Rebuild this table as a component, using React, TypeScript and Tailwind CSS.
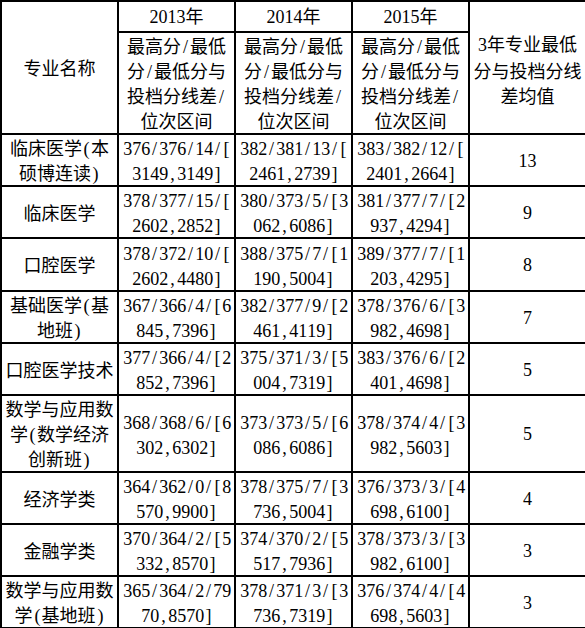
import React from "react";

const isAscii = (c: string) => /[\x00-\x7f]/.test(c);

function Half({ s }: { s: string }) {
  return (
    <>
      {s.split("").map((c, i) =>
        isAscii(c) ? (
          <span
            key={i}
            className="inline-block w-[9px] text-center font-['Liberation_Serif',serif] text-[19px] scale-x-[0.95]"
          >
            {c}
          </span>
        ) : (
          <span key={i}>{c}</span>
        )
      )}
    </>
  );
}

function Lines({ lines }: { lines: string[] }) {
  return (
    <div className="flex flex-col items-center">
      {lines.map((l, i) => (
        <div key={i} className="whitespace-nowrap leading-[25px] h-[25px]">
          <Half s={l} />
        </div>
      ))}
    </div>
  );
}

type Row = {
  h: string;
  name: string[];
  a: string[];
  b: string[];
  c: string[];
  avg: string;
};

const rows: Row[] = [
  { h: "h-[52px]", name: ["临床医学(本", "硕博连读)"], a: ["376/376/14/[", "3149,3149]"], b: ["382/381/13/[", "2461,2739]"], c: ["383/382/12/[", "2401,2664]"], avg: "13" },
  { h: "h-[52px]", name: ["临床医学"], a: ["378/377/15/[", "2602,2852]"], b: ["380/373/5/[3", "062,6086]"], c: ["381/377/7/[2", "937,4294]"], avg: "9" },
  { h: "h-[53px]", name: ["口腔医学"], a: ["378/372/10/[", "2602,4480]"], b: ["388/375/7/[1", "190,5004]"], c: ["389/377/7/[1", "203,4295]"], avg: "8" },
  { h: "h-[52px]", name: ["基础医学(基", "地班)"], a: ["367/366/4/[6", "845,7396]"], b: ["382/377/9/[2", "461,4119]"], c: ["378/376/6/[3", "982,4698]"], avg: "7" },
  { h: "h-[52px]", name: ["口腔医学技术"], a: ["377/366/4/[2", "852,7396]"], b: ["375/371/3/[5", "004,7319]"], c: ["383/376/6/[2", "401,4698]"], avg: "5" },
  { h: "h-[77px]", name: ["数学与应用数", "学(数学经济", "创新班)"], a: ["368/368/6/[6", "302,6302]"], b: ["373/373/5/[6", "086,6086]"], c: ["378/374/4/[3", "982,5603]"], avg: "5" },
  { h: "h-[52px]", name: ["经济学类"], a: ["364/362/0/[8", "570,9900]"], b: ["378/375/7/[3", "736,5004]"], c: ["376/373/3/[4", "698,6100]"], avg: "4" },
  { h: "h-[52px]", name: ["金融学类"], a: ["370/364/2/[5", "332,8570]"], b: ["374/370/2/[5", "517,7936]"], c: ["378/373/3/[3", "982,6100]"], avg: "3" },
  { h: "h-[52px]", name: ["数学与应用数", "学(基地班)"], a: ["365/364/2/79", "70,8570]"], b: ["378/371/3/[3", "736,7319]"], c: ["376/374/4/[4", "698,5603]"], avg: "3" },
];

const cell = "border-2 border-black p-0 align-middle text-center";
const sub = ["最高分/最低", "分/最低分与", "投档分线差/", "位次区间"];

export default function App() {
  return (
    <div className="bg-white w-[585px] h-[628px] overflow-hidden font-['Noto_Sans_CJK_SC',sans-serif] text-[18px] text-black">
      <table className="table-fixed border-collapse w-[585px]">
        <colgroup>
          <col className="w-[117px]" />
          <col className="w-[117px]" />
          <col className="w-[117px]" />
          <col className="w-[117px]" />
          <col className="w-[117px]" />
        </colgroup>
        <tbody>
          <tr className="h-[31px]">
            <td rowSpan={2} className={cell}>
              <Lines lines={["专业名称"]} />
            </td>
            {["2013", "2014", "2015"].map((y) => (
              <td key={y} className={cell}>
                <div className="leading-[25px]">
                  <span className="font-['Liberation_Serif',serif] text-[18px]">{y}</span>
                  <span>年</span>
                </div>
              </td>
            ))}
            <td rowSpan={2} className={cell}>
              <div className="flex flex-col items-center pt-[4px]">
                <div className="leading-[25px] whitespace-nowrap">
                  <span className="font-['Liberation_Serif',serif] text-[18px]">3</span>年专业最低
                </div>
                <div className="leading-[25px] whitespace-nowrap">分与投档分线</div>
                <div className="leading-[25px] whitespace-nowrap">差均值</div>
              </div>
            </td>
          </tr>
          <tr className="h-[102px]">
            {[0, 1, 2].map((i) => (
              <td key={i} className={cell}>
                <Lines lines={sub} />
              </td>
            ))}
          </tr>
          {rows.map((r, i) => (
            <tr key={i} className={r.h}>
              <td className={cell}>
                <Lines lines={r.name} />
              </td>
              <td className={cell}>
                <Lines lines={r.a} />
              </td>
              <td className={cell}>
                <Lines lines={r.b} />
              </td>
              <td className={cell}>
                <Lines lines={r.c} />
              </td>
              <td className={cell}>
                <span className="font-['Liberation_Serif',serif] text-[18px]">{r.avg}</span>
              </td>
            </tr>
          ))}
        </tbody>
      </table>
    </div>
  );
}
